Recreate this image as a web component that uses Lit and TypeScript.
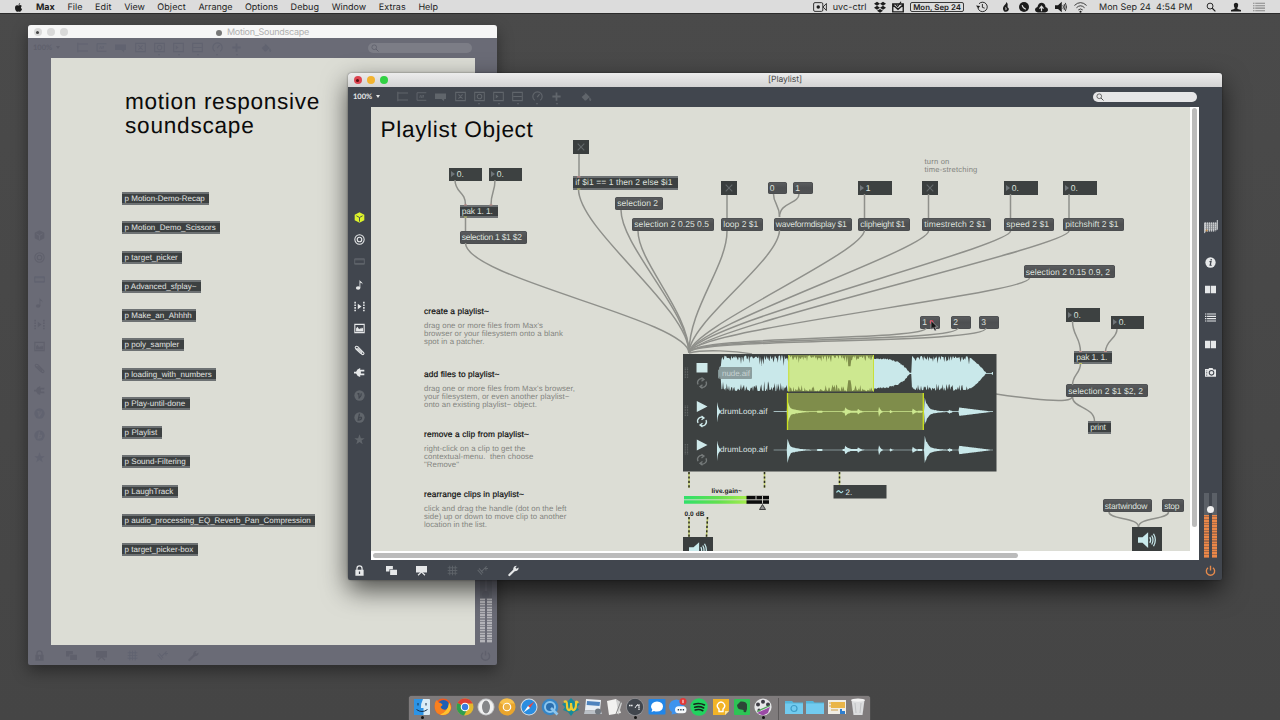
import { LitElement, html, svg, css, nothing } from "lit";
import { customElement, property } from "lit/decorators.js";
import { classMap } from "lit/directives/class-map.js";
import { styleMap } from "lit/directives/style-map.js";

/* ---------- text fitting ---------- */
const pen = document.createElement("canvas").getContext("2d")!;
/** Letter spacing that makes `text` span `width` pixels in the given font. */
function tracking(text: string, font: string, width: number) {
  pen.font = font;
  return `${((width - pen.measureText(text).width) / text.length).toFixed(3)}px`;
}
const fit = (text: string, font: string, width: number, cls = "") =>
  html`<span class="fit ${cls}" style=${styleMap({ letterSpacing: tracking(text, font, width) })}>${text}</span>`;

const SANS = '"Liberation Sans"';

/* ---------- icons, drawn on a 16 x 16 grid ---------- */
const G: Record<string, unknown> = {
  object: svg`<path d="M.500 3H16M.500 13H16M1.200 1V15" fill="none" stroke="currentColor" stroke-width="1.6"/>`,
  message: svg`<path d="M15 2.5H1.500V13.5H15M5.500 10l1-4M8 10l1-4M10 10l1-4" fill="none" stroke="currentColor" stroke-width="1.4"/>`,
  comment: svg`<path d="M0 3.500H16V11.500H13.500L13 15L9.500 11.500H0Z" fill="currentColor"/>`,
  toggle: svg`<path d="M1 2H15V14H1ZM5 5L11 11M11 5L5 11" fill="none" stroke="currentColor" stroke-width="1.500"/>`,
  button: svg`<path d="M1 2H15V14H1Z" fill="none" stroke="currentColor" stroke-width="1.500"/><circle cx="8" cy="8" r="3.300" fill="none" stroke="currentColor" stroke-width="1.600"/>`,
  number: svg`<path d="M1 2H15V14H1Z" fill="none" stroke="currentColor" stroke-width="1.500"/><path d="M4 5L8 8L4 11Z" fill="currentColor"/>`,
  slider: svg`<path d="M1 2H15V14H1ZM2 8H14" fill="none" stroke="currentColor" stroke-width="1.500"/>`,
  dial: svg`<path d="M4 13.500A6.800 6.800 0 1 1 12 13.500M7.500 9L11 4.500" fill="none" stroke="currentColor" stroke-width="1.700"/>`,
  plus: svg`<path d="M8 2V14M2 8H14" stroke="currentColor" stroke-width="2.600"/>`,
  bucket: svg`<path d="M1 8L8 2L14 8L8 13.500H6Z" fill="currentColor"/><path d="M14 9q3 4 1 5q-2 0-1-5M6 1l4 5" fill="currentColor" stroke="currentColor"/>`,
  cube: svg`<path d="M8 0.500L15 4V12L8 15.500L1 12V4Z" fill="currentColor"/><path d="M3.500 5.500L8 8L12.500 5.500M8 8V14" fill="none" stroke="var(--hole)" stroke-width="1.300"/>`,
  target: svg`<circle cx="8" cy="8" r="6.800" fill="none" stroke="currentColor" stroke-width="1.500"/><circle cx="8" cy="8" r="3.300" fill="none" stroke="currentColor" stroke-width="1.700"/>`,
  film: svg`<path d="M1 4H15V12H1ZM1 5.500H15M1 10.800H15" fill="none" stroke="currentColor" stroke-width="1.400"/>`,
  note: svg`<path d="M8 12V1C9 4 13.500 4 12 8C12 6 9.500 5.500 9.200 5.500V13Z" fill="currentColor"/><ellipse cx="6" cy="13" rx="3.300" ry="2.500" fill="currentColor"/>`,
  clip: svg`<path d="M.5 1H2.800V3.500H.5ZM.5 5H2.800V7.300H.5ZM.5 8.800H2.800V11.200H.5ZM.5 12.700H2.800V15H.5ZM13.200 1H15.500V3.500H13.200ZM13.200 5H15.500V7.300H13.200ZM13.200 8.800H15.500V11.200H13.200ZM13.200 12.700H15.500V15H13.200ZM5.500 4L11 8L5.500 12Z" fill="currentColor"/>`,
  image: svg`<path d="M1.200 2H14.800V14H1.200Z" fill="none" stroke="currentColor" stroke-width="1.600"/><path d="M3 12.500V8L5 5.500L7.500 9L9 7.500L10.500 8.500L11.500 6.500L13.200 8V12.500Z" fill="currentColor"/>`,
  paperclip: svg`<path d="M3 5L11.500 13.500C13.500 15 15.500 12.500 14 11L5.500 2.500C3 .5 .5 3 2.500 5.500L9.500 12C11 13 12 11.500 11 10.500L5 4.500" fill="none" stroke="currentColor" stroke-width="1.500"/>`,
  plug: svg`<path d="M0 7H3Q4 3 9 1.500V4H15V6.500H10V9.500H15V12H9V14.500Q4 13 3 9.500H0Z" fill="currentColor"/>`,
  vee: svg`<circle cx="8" cy="8" r="7.500" fill="currentColor"/><path d="M5 5.500L7 5L7.500 11.500Q11 9 10.500 5" fill="none" stroke="var(--hole)" stroke-width="1.800"/>`,
  bee: svg`<circle cx="8" cy="8" r="7.500" fill="currentColor"/><path d="M8 2.500L6 12Q11 12 11 8.500Q10 6.500 7 9" fill="none" stroke="var(--hole)" stroke-width="1.800"/>`,
  star: svg`<path d="M8 .5L10 6H15.500L11 9.300L12.700 15L8 11.600L3.300 15L5 9.300L.5 6H6Z" fill="currentColor"/>`,
  lock: svg`<path d="M4.300 7.500V5A3.700 3.700 0 0 1 11.700 5V7.500" fill="none" stroke="currentColor" stroke-width="1.800"/><path d="M2 7H14V15.500H2Z" fill="currentColor"/><path d="M8 9.500V13" stroke="var(--hole)" stroke-width="1.800"/>`,
  windows: svg`<path d="M0 1.500H10V6H5V9.500H0Z" fill="currentColor"/><path d="M6 7H16V14.500H6Z" fill="currentColor"/>`,
  easel: svg`<path d="M0 1.500H16V11H0Z" fill="currentColor"/><path d="M8 10L3 15M8 10L13 15" stroke="currentColor" stroke-width="1.800"/>`,
  grid: svg`<path d="M1 4H15M1 8H15M1 12H15M4 1V15M8 1V15M12 1V15" stroke="currentColor" stroke-width="1.300"/>`,
  wand: svg`<path d="M1 7L7 14M3 5L9 12M6 10L14 2M10 5H16M13 2V8" stroke="currentColor" stroke-width="1.500"/>`,
  wrench: svg`<path d="M2 14.500L9 7.500" stroke="currentColor" stroke-width="3.200" stroke-linecap="round"/><path d="M7.500 6Q8 1 13 1L10.800 3.800L12.200 5.500L15.500 3.500Q15.500 9 9.500 9Z" fill="currentColor"/>`,
  matrix: svg`<path d="M1 3H15V12H1Z" fill="currentColor" opacity=".35"/><path d="M1 3.500H15M1 5.800H15M1 8.100H15M1 10.400H15M1 12.400H13" stroke="currentColor" stroke-width="1.500" stroke-dasharray="1.400 .9"/><path d="M.800 3V15M15.200 0V11" stroke="currentColor" stroke-width="1"/><circle cx="3" cy="12" r="1.200" fill="#b98646"/>`,
  info: svg`<circle cx="8" cy="8" r="7.500" fill="currentColor"/><path d="M9 3V5M6.500 6.700H8.700L7.500 12H9.800" fill="none" stroke="var(--hole)" stroke-width="1.800"/>`,
  book: svg`<path d="M0 2.500H7.500V13.500H0ZM8.500 2.500H16V13.500H8.500Z" fill="currentColor"/>`,
  list: svg`<path d="M0 3H2M3 3H16M0 6.300H2M3 6.300H16M0 9.600H2M3 9.600H16M0 13H2M3 13H16" stroke="currentColor" stroke-width="1.600"/>`,
  camera: svg`<path d="M0 3H5L6 1.500H11L12 3.500H16V14H0Z" fill="currentColor"/><circle cx="9.500" cy="8.500" r="3.300" fill="none" stroke="var(--hole)" stroke-width="1.500"/><path d="M2.500 5V13" stroke="var(--hole)" stroke-width="1.200" stroke-dasharray="1.300 1"/>`,
  power: svg`<path d="M4.500 4A6 6 0 1 0 11.500 4M8 1V8" fill="none" stroke="currentColor" stroke-width="2"/>`,
  lens: svg`<circle cx="6.500" cy="6.500" r="4.700" fill="none" stroke="currentColor" stroke-width="1.500"/><path d="M10 10L15 15" stroke="currentColor" stroke-width="1.800"/>`,
  speaker: svg`<path d="M0 5.500H4L9 1V15L4 10.500H0Z" fill="currentColor"/><path d="M10.500 5.500Q12 8 10.500 10.500M12.200 4Q14.500 8 12.200 12M13.800 2.500Q17 8 13.800 13.500" fill="none" stroke="currentColor" stroke-width="1.100"/>`,
  apple: svg`<path d="M11 0Q8 .8 8 3.500Q10.800 3.200 11 0ZM8 4.500Q11.500 2.500 14 5.500Q10.500 8 14.300 11Q12 16.500 9.500 15.500Q8 14.700 6.500 15.500Q4 16.500 2 11Q1 4 5.500 4Z" fill="currentColor"/>`,
  video: svg`<rect x=".7" y="3" width="10.500" height="10" rx="1.500" fill="none" stroke="currentColor" stroke-width="1"/><circle cx="6" cy="8" r="2" fill="currentColor"/><path d="M11.500 8L15.300 4V12Z" fill="none" stroke="currentColor" stroke-width="1"/>`,
  dropbox: svg`<path d="M4 1L8 3.700L4 6.400L0 3.700ZM12 1L16 3.700L12 6.400L8 3.700ZM4 6.400L8 9.100L4 11.800L0 9.100ZM12 6.400L16 9.100L12 11.800L8 9.100ZM8 10.500L12 13L8 15.800L4 13Z" fill="currentColor"/>`,
  mail: svg`<path d="M1 4H15V14.500H1ZM1 5L8 11L15 5" fill="none" stroke="currentColor" stroke-width="1.800"/><path d="M5 4.500L7.500 7.500L12 1" fill="none" stroke="currentColor" stroke-width="1.500"/>`,
  history: svg`<path d="M2.500 9A6.300 6.300 0 1 0 4 3.700M8.500 4V8.500L11.500 9.500" fill="none" stroke="currentColor" stroke-width="1.200"/><path d="M0 6L5.500 6.500L3 10Z" fill="currentColor"/>`,
  flame: svg`<path d="M9 0Q8 3 4.500 6.500Q1.500 11 5 15Q9 16.500 11.500 14Q14 10.500 10.500 8.500Q12 3 9 0Z" fill="currentColor"/><path d="M7.500 8V12.500Q9 12.500 8.800 10" fill="none" stroke="#ddd"/>`,
  phone: svg`<circle cx="8" cy="8" r="8" fill="currentColor"/><path d="M5 5Q6 10 11 11.500" fill="none" stroke="#ddd" stroke-width="1.700"/>`,
  cloud: svg`<path d="M3.500 14Q0 13.500 0 10.500Q0 8 3 7.300Q4 2 8.500 2Q12.500 2.500 13 7.300Q16 8 16 10.700Q16 13.500 12.500 14Z" fill="currentColor"/><path d="M8 12.500V8M5.500 9.500L8 6.500L10.500 9.500" fill="none" stroke="#ddd" stroke-width="1.500"/>`,
  wifi: svg`<path d="M.5 5.500Q8-1.500 15.500 5.500M3 8.300Q8 3.500 13 8.300M5.300 11Q8 8.500 10.700 11" fill="none" stroke="currentColor" stroke-width="1"/><circle cx="8" cy="13.300" r="1.300" fill="currentColor"/>`,
  user: svg`<path d="M0 15V12.800L5.500 11L6 9.500Q4.500 7.500 4.500 4Q5 1 8 1Q11 1 11.500 4Q11.500 7.500 10 9.500L10.500 11L16 12.800V15Z" fill="currentColor"/>`,
};
const icon = (name: string, size = 11, cls = "") =>
  html`<svg class="icon ${cls}" viewBox="0 0 16 16" width=${size} height=${size}>${G[name]}</svg>`;

/* ---------- patcher window ---------- */
const TOOLS = ["object", "message", "comment", "toggle", "button", "number", "slider", "dial", "plus"];
const SIDE: [string, string][] = [
  ["cube", "lime"], ["target", "on"], ["film", "off"], ["note", "on"], ["clip", "on"], ["image", "on"],
  ["paperclip", "on"], ["plug", "on"], ["vee", "off"], ["bee", "off"], ["star", "off"],
];
const FOOT: [string, string][] = [
  ["lock", "on"], ["windows", "on"], ["easel", "on"], ["grid", "off"], ["wand", "off"], ["wrench", "on"],
];
const PANEL = ["matrix", "info", "book", "list", "book", "camera"];

@customElement("max-window")
export class MaxWindow extends LitElement {
  @property() label = "";
  @property({ type: Boolean, reflect: true }) active = false;

  static styles = css`
    :host { display: grid; grid-template-rows: 13px 20px 1fr 20px; --frame: #6a6b76; --hole: #6a6b76; --on: #5f606c; --off: #616370;
      background: var(--frame); border-radius: 3px 3px 2px 2px; overflow: hidden; color: var(--on); text-rendering: geometricPrecision; }
    :host([active]) { grid-template-rows: 14px 20px 1fr 20px; --frame: #41464e; --hole: #41464e; --on: #e6e8e9; --off: #60656b; }
    .icon { display: block; flex: none; overflow: visible; }
    .title { display: grid; grid-template-columns: 60px 1fr 60px; align-items: center; background: #f6f6f6; color: #b0b0b0; font: 9px Inter, sans-serif; }
    :host([active]) .title { background: linear-gradient(#ececec, #d3d3d3); color: #4a4a4a; font-size: 8.500px; }
    .lights { display: flex; gap: 5.300px; padding-left: 5.500px; }
    .light { width: 8px; height: 8px; border-radius: 50%; background: #d9d9d9; display: grid; place-items: center; }
    .light.first::after { content: ""; width: 3px; height: 3px; border-radius: 50%; background: #444; }
    :host([active]) .close { background: #dd4450; }
    :host([active]) .light.first::after { background: #5e0d10; }
    :host([active]) .mini { background: #f2b32f; }
    :host([active]) .zoom { background: #31d143; }
    .name { display: flex; justify-content: center; align-items: center; gap: 5px; white-space: nowrap; line-height: 13px; padding-top: 1px; }
    .doc { width: 6px; height: 6px; border-radius: 50%; background: #777; }
    .tools { display: flex; align-items: center; padding: 0 25px 1px 5px; }
    .zoomlevel { width: 39.500px; font: bold 7.500px Lato, sans-serif; color: var(--on); display: flex; align-items: center; gap: 4px; }
    .tri { border: 2px solid transparent; border-top: 3.500px solid currentColor; border-bottom: 0; }
    .tool { width: 19.300px; display: flex; justify-content: center; position: relative; color: var(--off); }
    .tool.more::after { content: ""; position: absolute; bottom: -3px; border: 1.500px solid transparent; border-top: 2px solid currentColor; border-bottom: 0; }
    .bucket { margin-left: 10.500px; }
    .search { margin-left: auto; width: 101px; height: 10px; border-radius: 5px; background: #7c7d86; padding-left: 3px; display: flex; align-items: center; color: #5c5e69; }
    :host([active]) .search { background: #e6e6e7; color: #444; }
    .body { display: grid; grid-template-columns: 23px 1fr 22px; min-height: 0; }
    :host([active]) .body { grid-template-columns: 23px 1fr 23px; }
    .side { display: flex; flex-direction: column; align-items: center; justify-content: center; gap: 11.200px; padding-bottom: 10px; }
    .on { color: var(--on); } .off { color: var(--off); }
    .lime { color: var(--on); }
    :host([active]) .lime { color: #dcf32b; }
    .view { display: grid; min-width: 0; min-height: 0; background: #dcddd5; overflow: hidden; }
    :host([active]) .view { grid-template: 1fr 9px / 1fr 9px; background: #fff; }
    .canvas { position: relative; overflow: hidden; background: #dcddd5; }
    .vbar { padding: 1px 2px 24px; display: flex; } .hbar { padding: 2px 172px 2px 2px; display: flex; }
    .thumb { flex: 1; border-radius: 3px; background: #bbb; }
    .right { display: flex; flex-direction: column; align-items: center; padding-top: 113px; gap: 16.600px; }
    .right .matrix { margin-bottom: 6px; }
    .meters { margin-top: auto; display: flex; gap: 2.500px; padding-bottom: 2px; position: relative; }
    .meter { width: 5px; height: 65px; background: linear-gradient(#62646e 0 20px, transparent 20px), repeating-linear-gradient(#b3b3b8 0 1.400px, #85868e 1.400px 2.600px); }
    :host([active]) .meter { background: linear-gradient(#5b6067 0 22px, transparent 22px), repeating-linear-gradient(#ea8748 0 1.500px, #a96a48 1.500px 2.700px); }
    .knob { position: absolute; left: 2.500px; top: 13px; width: 7px; height: 7px; border-radius: 50%; background: #5d5f6a; }
    :host([active]) .knob { background: #f0f0f0; }
    .foot { display: flex; align-items: center; padding-left: 5.500px; padding-right: 6px; }
    .foot .cell { width: 30.500px; display: flex; }
    .foot .cell:first-child { width: 32px; }
    .foot .power { margin-left: auto; }
    :host([active]) .power { color: #e58a4c; }
  `;

  render() {
    return html`
      <div class="title">
        <div class="lights"><i class="light first close"></i><i class="light mini"></i><i class="light zoom"></i></div>
        <div class="name">${this.active ? nothing : html`<i class="doc"></i>`}${this.active
          ? fit(this.label, "8.5px Inter", 34) : fit(this.label, "9px Inter", 82)}</div>
      </div>
      <div class="tools">
        <div class="zoomlevel">100% <i class="tri"></i></div>
        ${TOOLS.map((t, i) => html`<div class=${classMap({ tool: true, more: i > 3 })}>${icon(t, 11)}</div>`)}
        <div class="tool bucket">${icon("bucket", 10)}</div>
        <div class="search">${icon("lens", 8)}</div>
      </div>
      <div class="body">
        <div class="side">${SIDE.map(([n, c]) => icon(n, 11, c))}</div>
        <div class="view">
          <div class="canvas"><slot></slot></div>
          ${this.active
            ? html`<div class="vbar"><i class="thumb"></i></div><div class="hbar"><i class="thumb"></i></div>`
            : nothing}
        </div>
        <div class="right">
          ${PANEL.map((n) => icon(n, n === "matrix" ? 14 : 11, n))}
          <div class="meters"><i class="meter"></i><i class="meter"></i><i class="knob"></i></div>
        </div>
      </div>
      <div class="foot">
        ${FOOT.map(([n, c]) => html`<div class="cell ${c}">${icon(n, 11)}</div>`)}
        <span class="power">${icon("power", 11)}</span>
      </div>
    `;
  }
}

/* ---------- patch data ---------- */
const SUBPATCHERS: [string, number][] = [
  ["p Motion-Demo-Recap", 87], ["p Motion_Demo_Scissors", 98], ["p target_picker", 60], ["p Advanced_sfplay~", 79],
  ["p Make_an_Ahhhh", 74], ["p poly_sampler", 61.5], ["p loading_with_numbers", 94], ["p Play-until-done", 67.5],
  ["p Playlist", 39.5], ["p Sound-Filtering", 68], ["p LaughTrack", 55.5],
  ["p audio_processing_EQ_Reverb_Pan_Compression", 193], ["p target_picker-box", 75.5],
];

type Kind = "obj" | "msg" | "num" | "tog" | "dac";
/** kind, x, y, width, height, text */
const NODES: [Kind, number, number, number, number, string][] = [
  ["num", 449, 167.5, 33, 13, "0."], ["num", 489, 167.5, 33, 13, "0."],
  ["obj", 459.5, 204.5, 38, 13, "pak 1. 1."], ["msg", 459.5, 230.5, 67, 13, "selection 1 $1 $2"],
  ["tog", 573, 140, 16, 14, ""], ["obj", 573, 176, 104.5, 13.5, "if $i1 == 1 then 2 else $i1"],
  ["msg", 615, 196.5, 48, 13.5, "selection 2"], ["msg", 632, 217.5, 82, 13.5, "selection 2 0.25 0.5"],
  ["tog", 721, 181, 16, 14, ""], ["msg", 721, 217.5, 42, 13.5, "loop 2 $1"],
  ["msg", 767.5, 181.5, 19.5, 12.5, "0"], ["msg", 793, 181.5, 19.5, 12.5, "1"],
  ["msg", 773.5, 217.5, 78, 13, "waveformdisplay $1"],
  ["num", 858, 181, 33.5, 13.5, "1"], ["msg", 858, 217.5, 52, 13, "clipheight $1"],
  ["tog", 922, 181, 16, 14, ""], ["msg", 922, 217.5, 69, 13.5, "timestretch 2 $1"],
  ["num", 1004, 181, 33.5, 13.5, "0."], ["msg", 1004, 217.5, 50, 13.5, "speed 2 $1"],
  ["num", 1063, 181, 33.5, 13.5, "0."], ["msg", 1063, 217.5, 60.5, 13.5, "pitchshift 2 $1"],
  ["msg", 1023.5, 265, 91.5, 13, "selection 2 0.15 0.9, 2"],
  ["msg", 920, 316, 20, 12.5, "1"], ["msg", 951, 316, 20, 12.5, "2"], ["msg", 979, 316, 20, 12.5, "3"],
  ["num", 1066, 308, 33.5, 13.5, "0."], ["num", 1111, 315.5, 33, 13.5, "0."],
  ["obj", 1074, 351, 38, 13, "pak 1. 1."], ["msg", 1066, 384, 82, 13, "selection 2 $1 $2, 2"],
  ["obj", 1088, 420.5, 22.5, 13.5, "print"],
  ["msg", 1102.5, 499, 49.5, 13, "startwindow"], ["msg", 1162, 499, 22, 13, "stop"],
  ["dac", 1132, 527, 30, 25, ""], ["dac", 683, 537, 29.5, 25, ""],
];

const CORDS = [
  "M455 180C455 193 465.5 191 465.5 205", "M495 180C495 192 491 192 491 205", "M465.500 217V231",
  "M465.500 243C465.500 278 689 320 689 353", "M579 154V176", "M578.500 189C578.500 230 689 308 689 353",
  "M621 210C621 246 689 312 689 353", "M638 231C638 262 689 312 689 353",
  "M727 195V218", "M727 231C727 266 689 308 689 353",
  "M773.500 194C773.500 204 779.500 204 779.500 217", "M799 194C799 204 779.500 202 779.500 217",
  "M779.500 230C779.500 260 689 322 689 353", "M864.500 194V218", "M864.500 230C864.500 253 689 328 689 353",
  "M928.500 194V218", "M928.500 231C928.500 249 689 328 689 353",
  "M1010.500 194V218", "M1010.500 231C1010.500 247 689 326 689 353",
  "M1069 194V218", "M1069 231C1069 247 689 330 689 353",
  "M1029.500 278C1029.500 294 689 329 689 353",
  "M926 328C926 341 689 335 689 353", "M958 328C958 343 689 336 689 353", "M986 328C986 345 689 337 689 353",
  "M1072 397C1072 404 1030 399 996 394", "M752 354C735 351 705 349 689 353",
  "M1072.500 321C1072.500 336 1080.500 337 1080.500 352", "M1117 329C1117 339 1105.500 340 1105.500 352",
  "M1080.500 364C1080.500 373 1072.500 375 1072.500 385", "M1072.500 397C1072.500 408 1094.500 407 1094.500 421",
  "M1109 512C1109 520 1138.500 517 1138.500 527", "M1168.500 512C1168.500 520 1138.500 517 1138.500 527",
];
const SIGNALS = ["M689 472V488", "M764.500 472V488", "M839.500 472V485", "M689 517V537", "M707.500 517L706.500 537"];

/** x, y, heading, its width, body lines with their widths */
const HELP: [number, number, string, number, [string, number][]][] = [
  [424, 307, "create a playlist~", 65, [["drag one or more files from Max's", 119], ["browser or your filesystem onto a blank", 139], ["spot in a patcher.", 60.5]]],
  [424, 370, "add files to playlist~", 75.5, [["drag one or more files from Max's browser,", 151], ["your filesystem, or even another playlist~", 145.5], ["onto an existing playlist~ object.", 113]]],
  [424, 430, "remove a clip from playlist~", 105, [["right-click on a clip to get the", 101.5], ["contextual-menu.\u00a0 then choose", 109.5], ['"Remove"', 35]]],
  [424, 490, "rearrange clips in playlist~", 100, [["click and drag the handle (dot on the left", 142.5], ["side) up or down to move clip to another", 142.5], ["location in the list.", 63]]],
];

const OX = 371, OY = 107;
const at = (x: number, y: number, w?: number, h?: number) =>
  styleMap({ left: `${x - OX}px`, top: `${y - OY}px`, ...(w ? { width: `${w}px` } : {}), ...(h ? { height: `${h}px` } : {}) });

/* ---------- waveforms ---------- */
const noise = (i: number) => { const v = Math.sin(i * 127.1) * 43758.5453; return v - Math.floor(v); };
function outline(x0: number, x1: number, cy: number, amp: (x: number, i: number) => number) {
  const top: string[] = [], low: string[] = [];
  for (let x = x0, i = 0; x <= x1; x += 0.75, i++) {
    top.push(`${x.toFixed(2)} ${(cy - amp(x, i)).toFixed(2)}`);
    low.unshift(`${x.toFixed(2)} ${(cy + amp(x, i + 500)).toFixed(2)}`);
  }
  return `M${top.join("L")}L${low.join("L")}Z`;
}
const songAmp = (x: number, i: number) => {
  if (x < 721) return 5 * noise(i) + 3;
  if (x > 986) return 0.4 + (x > 992 ? 1 : 0);
  if (x > 909.5 && x < 912) return 0.6;
  const depth = x < 788 ? 13 : 9;
  const rough = 17.9 - depth * noise(i) * noise(i + 77);
  if (x < 874) return Math.abs(x - 849.5) < 1.3 ? 7 : rough;
  if (x < 910) { const t = (x - 874) / 36; return Math.max(1.5, 15.5 * Math.pow(1 - Math.pow(t, 3), 0.8) - noise(i) * 1.6); }
  return x > 970 ? Math.max(0.5, 16 * (1 - Math.pow((x - 970) / 17, 1.2)) - noise(i)) : rough - 0.5;
};
const HITS = [[717, 12, 1.4], [787.5, 14, 2.6], [790, 4, 9], [845, 5, 4], [858, 3, 3], [878.5, 7.5, 1.6], [890, 2, 2], [912.5, 4, 2.5], [924.5, 16.5, 3.6], [928, 4, 8], [949, 3, 1.5]];
const drumAmp = (x: number, i: number) => {
  let a = 0.35 + (noise(Math.round(x / 5)) > 0.8 ? 0.6 : 0);
  if (x > 720 && x < 774) return 0;
  for (const [h, g, d] of HITS) if (x >= h) a = Math.max(a, g * Math.exp(-(x - h) / d) * (0.8 + 0.2 * noise(i)));
  if (x > 959) a = Math.max(a, 4.2 * (1 - (x - 959) / 34));
  return a;
};
const SONG = outline(718.5, 993, 373.3, songAmp);
const DRUM = (cy: number) => outline(717, 993, cy, drumAmp);
const loopIcon = (cy: number, on: boolean) => svg`<g transform="translate(702 ${cy})" fill="none" stroke=${on ? "#cfe9ea" : "#757a7a"} stroke-width="1.300">
  <path d="M-4 1.500A4 4 0 0 1 1.500-3.800M4-1.500A4 4 0 0 1-1.500 3.800"/><path d="M-.5-5.500L2-3.600L-.5-1.800M.5 5.500L-2 3.600L.5 1.800"/></g>`;
const grip = (cy: number) => svg`<path d="M685.300 ${cy - 5.5}V${cy + 5.5}M687.500 ${cy - 5.5}V${cy + 5.5}" stroke="#5d6161" stroke-width="1.300" stroke-dasharray="1 .6"/>`;

/* ---------- menu bar and dock data ---------- */
const MENU: [string, number][] = [
  ["File", 15], ["Edit", 16.5], ["View", 20.5], ["Object", 28.5], ["Arrange", 34], ["Options", 33], ["Debug", 28.5],
  ["Window", 34.5], ["Extras", 27], ["Help", 19.5],
];
/** icon name, size, gap before it */
const STATUS: [string, number, number][] = [
  ["history", 12, 11.5], ["flame", 10, 13], ["phone", 10, 8.5], ["cloud", 13, 6], ["speaker", 12, 6.5], ["wifi", 13, 7.5],
];
const folder = svg`<path d="M0 3H7L8.500 4.500H18V16H0Z" fill="#54b5da"/><path d="M0 5.500H18V16H0Z" fill="#72cbef"/>`;
const DOCK: { art: unknown; run?: boolean; sep?: boolean }[] = [
  { run: true, art: svg`<rect x="1" y="1" width="16" height="16" rx="1" fill="#d9ecf7"/><path d="M1 1H10Q7.500 6 8 10H10.500L10.500 17H1Z" fill="#2c94e6"/><path d="M5 5V7.500M13 5V7.500M3.500 11.500Q9 15.500 14.500 11.500" fill="none" stroke="#14304f" stroke-width="1"/>` },
  { art: svg`<circle cx="9" cy="9" r="8.500" fill="#ef5a1f"/><circle cx="9.500" cy="8" r="6" fill="#1f5fb4"/><path d="M1 5Q1.500 3 3 2L4.500 4.500Q8 5 8.500 7L6.500 9Q8 12.500 12 11.500Q15.500 10 15 4.500Q19 10 14.500 15Q9 19 3 15Q0 11 1 5Z" fill="#f9801f"/><path d="M15 4.500Q19 10 14.500 15Q11 18 6 16.500Q14 14 15 4.500Z" fill="#fdc330"/>` },
  { art: svg`<circle cx="9" cy="9" r="8.500" fill="#e2b92f"/><path d="M9 9L1.600 4.800A8.500 8.500 0 0 0 8 17.400L12 10Z" fill="#2f9e4f"/><path d="M9 9L1.600 4.800A8.500 8.500 0 0 1 16.700 5.500H9Z" fill="#dd4035"/><circle cx="9" cy="9" r="4.300" fill="#fff"/><circle cx="9" cy="9" r="3.200" fill="#3a7de0"/>` },
  { art: svg`<circle cx="9" cy="9" r="8.500" fill="#c2c4c6"/><circle cx="9" cy="9" r="7.500" fill="#f1f1f1"/><ellipse cx="9" cy="9" rx="4" ry="6.500" fill="#858688"/>` },
  { art: svg`<circle cx="9" cy="9" r="8.500" fill="#e9a52c"/><path d="M9 9L1.600 4.800A8.500 8.500 0 0 1 16.700 5.500H9Z" fill="#f7c04c"/><circle cx="9" cy="9" r="4.300" fill="#fff"/><circle cx="9" cy="9" r="3.200" fill="#edb348"/>` },
  { art: svg`<circle cx="9" cy="9" r="8.500" fill="#d5dce2"/><circle cx="9" cy="9" r="7.500" fill="#2a8de0"/><path d="M14.500 3.500L10 10L8 8Z" fill="#e8483f"/><path d="M3.500 14.500L8 8L10 10Z" fill="#fff"/>` },
  { art: svg`<circle cx="9" cy="9" r="8.300" fill="#3585c6"/><circle cx="9" cy="9" r="5" fill="#2b6fae" stroke="#8cc6ee" stroke-width="2"/><path d="M10 10L16.500 16.500" stroke="#8cc6ee" stroke-width="2.600"/>` },
  { art: svg`<path d="M9 0L13 4L18 6L15 9L17 12L12 14L9 18L6 14L1 12L3 9L0 6L5 4Z" fill="#168a9a"/><path d="M2 4Q5 2 5 7Q5 12.500 7.500 12Q9.500 11 9 5Q9.500 13 12 12Q14.500 10 14 4Q14.500 3 16 5" fill="none" stroke="#efcb31" stroke-width="2.200"/>` },
  { art: svg`<path d="M2 1L17 2L16 13L1 12Z" fill="#e9eff4"/><path d="M3 3L16 4L15.500 8L2.700 7Z" fill="#4e83bd"/><path d="M1 12L17 13L18 16H0Z" fill="#bbc1c7"/><circle cx="14" cy="13.500" r="3" fill="#707880"/>` },
  { art: svg`<path d="M2 3L11 1L16 15L4 17Z" fill="#f2f2f0"/><path d="M11 1L17 5L13.500 17" fill="#d0d1d0"/><path d="M16 3L11 16" stroke="#858585" stroke-width="1"/>` },
  { run: true, art: svg`<circle cx="9" cy="9" r="8.800" fill="#9a9da1"/><circle cx="9" cy="9" r="8.200" fill="#41464d"/><path d="M3 7.500H7M11 7H13V12" fill="none" stroke="#e6e8ea" stroke-width="1.300" stroke-dasharray="1.500 .4"/><path d="M9 10L11 7" stroke="#e6e8ea"/>` },
  { art: svg`<rect x=".5" y="1" width="17" height="15.500" rx="1" fill="#2186e8"/><path d="M9 3.500Q15 4 15 8.500Q14.500 13.500 9 13.500Q7 13.500 6 13L3.500 14L4.300 11.500Q3 10 3 8.500Q3.500 4 9 3.500Z" fill="#fff"/>` },
  { art: svg`<path d="M7.500 1.500Q14.500 2 15 8.500Q14.500 15 7.500 15.500L2.500 16.500L3 14Q0 12 0 8.500Q.5 2 7.500 1.500Z" fill="#3d93ee"/><rect x="6" y="8.300" width="11.500" height="7" rx="3.500" fill="#f7fafc"/><path d="M8.700 11.800H15.500" stroke="#345" stroke-width="1.400" stroke-dasharray="1.400 1.100"/><circle cx="14" cy="3.500" r="3.500" fill="#e23737"/><path d="M14 1.800V5.200" stroke="#fff"/>` },
  { art: svg`<circle cx="9" cy="9" r="8.700" fill="#22d35f"/><path d="M4 6.200Q9.500 4.500 14.500 7M4.700 9.200Q9.500 7.800 13.700 10M5.200 12Q9.500 10.800 12.800 12.700" fill="none" stroke="#14291b" stroke-width="1.600" stroke-linecap="round"/>` },
  { art: svg`<path d="M1 1H17V13L13 17H1Z" fill="#f2b427"/><path d="M13 17V13H17Z" fill="#fbe59e"/><path d="M7 11Q4.500 9 5.500 6.500Q7 4 9 4Q11 4 12.500 6.500Q13.500 9 11 11V13.500H7Z" fill="none" stroke="#fff" stroke-width="1.400"/>` },
  { art: svg`<rect x="1" y="1" width="16" height="16" rx="1" fill="#2dc455"/><path d="M4 7L7.500 3.500Q13 3 14 6.500Q14.500 11 13 14Q10 15 10.500 12L8 11.500Q4.500 11.500 4 7Z" fill="#2d4637"/>` },
  { run: true, art: svg`<circle cx="9" cy="9" r="8.600" fill="#e6e6e8"/><g fill="#3d3b44"><circle cx="9" cy="3.700" r="2"/><circle cx="4" cy="6.500" r="2"/><circle cx="14" cy="6.500" r="2"/><circle cx="5" cy="12" r="1.500"/></g><path d="M3 15L16 9L14 15L9 17.500Z" fill="#9b4aa6"/><path d="M3 13.500L16 7.500" stroke="#51a75c" stroke-width="1.300"/>` },
  { sep: true, art: svg`${folder}<circle cx="9" cy="10.500" r="3" fill="none" stroke="#3f9dc6" stroke-width="1.200"/>` },
  { art: folder },
  { art: svg`<rect y="2" width="18" height="14" fill="#f0ede4"/><path d="M3 4H17V10H3Z" fill="#e9b548"/><path d="M1 5H3M1 8H3M3 12H10" stroke="#d0a04a"/><path d="M12 11H14V13H17V16H12Z" fill="#2f7fd0"/>` },
  { art: svg`<path d="M2.500 2H15.500L13.500 17H4.500Z" fill="#dcdddf"/><ellipse cx="9" cy="2.200" rx="7" ry="1.600" fill="#f3f3f3"/><path d="M6 5L7 15M12 5L11 15" stroke="#c1c3c5"/>` },
];

@customElement("app-root")
export class AppRoot extends LitElement {
  static styles = css`
    :host { display: block; position: relative; width: 1280px; height: 720px; overflow: hidden; background: linear-gradient(#4a4a4a, #454545);
      font-family: "Liberation Sans", Arial, sans-serif; text-rendering: geometricPrecision; }
    .icon { display: block; flex: none; overflow: visible; }
    .fit { white-space: pre; display: block; }
    .menubar { box-sizing: border-box; height: 14px; display: flex; align-items: center; padding: 1px 0 0 14px; background: #dcdcdc; border-bottom: 1px solid #2c2c2c;
      color: #1c1c1c; font: 9px/13px Inter, sans-serif; gap: 12.600px; }
    .menubar .brand { font-weight: 700; }
    .menubar .apple { margin-right: .3px; }
    .status { display: flex; align-items: center; margin-left: auto; padding-right: 15.500px; }
    .status > * { flex: none; }
    .g6 { margin-left: 6px; } .g7 { margin-left: 7px; }
    .g11 { margin-left: 11.500px; } .g14 { margin-left: 13.500px; } .g15 { margin-left: 15px; }
    .date { border: 1px solid #3a3a3a; border-radius: 2px; height: 8px; line-height: 8.500px; padding: 0 2.500px; margin-left: 6px; font-weight: 600; font-size: 7.800px; }
    .faint { color: #888; }
    .back { position: absolute; left: 28px; top: 25px; width: 469px; height: 640px; box-shadow: 0 6px 16px rgba(0,0,0,.4); }
    .front { position: absolute; left: 348px; top: 73px; width: 874px; height: 507px; }
    .cast { position: absolute; left: 348px; top: 73px; width: 874px; height: 507px; border-radius: 4px; box-shadow: 0 10px 26px rgba(0,0,0,.66), 0 0 2px rgba(0,0,0,.5); }
    .patch { padding: 32px 0 0 71px; }
    .heading { font-size: 22.600px; line-height: 24px; padding-left: 3px; color: #0b0b0b; }
    .subs { display: flex; flex-direction: column; align-items: flex-start; gap: 16.250px; padding-top: 54px; }
    .obj { box-sizing: border-box; height: 13px; background: #3c4041; border: solid #6d7173; border-width: 2.200px 0; color: #e2e4e2; font-size: 8px; padding-left: 2.600px; display: flex; align-items: center; line-height: 9px; }
    .node { position: absolute; font-size: 8.500px; color: #dfe1df; padding-left: 2.300px; }
    .msg { box-sizing: border-box; border-radius: 2.500px; background: linear-gradient(#5c5e60, #4d4f51 50%, #515355); display: flex; align-items: center; line-height: 10px; box-shadow: inset 0 0 0 .6px #47494b; }
    .num { box-sizing: border-box; background: #3d4141; display: flex; align-items: center; gap: 1.500px; }
    .flag { border: 3px solid transparent; border-left: 4px solid #70767a; border-right: 0; }
    .tog, .dac { box-sizing: border-box; background: #3a3e3e; padding: 0; display: grid; place-items: center; color: #63686a; }
    .dac { color: #c9eaec; }
    .board { position: absolute; inset: 0; width: 819px; height: 444px; }
    .abs { position: absolute; }
    .title { font-size: 22.600px; line-height: 26px; color: #0b0b0b; }
    .help h4 { margin: 0 0 5px; font-weight: 400; font-size: 8.300px; line-height: 9px; color: #0e0e0e; -webkit-text-stroke: .2px #0e0e0e; }
    .help { font-size: 7.800px; line-height: 8.050px; color: #83847f; }
    .help .lines { padding-top: .8px; }
    .hint { font-size: 7.600px; line-height: 8px; color: #83847f; }
    .tiny { font-size: 6.500px; line-height: 8px; font-weight: 700; color: #1a1a1a; }
    .clip { font-size: 8px; line-height: 9px; color: #dfe6e6; }
    .chip { background: rgba(128,145,146,.85); color: #c6d2d2; border-radius: 1px; padding: 1.500px 0 1.500px 3px; font-size: 8px; line-height: 9px; box-sizing: border-box; }
    .dock { position: absolute; left: 409px; top: 696px; width: 461px; height: 24px; box-sizing: border-box; padding: 2px 0 0 2.500px; display: flex;
      background: #7f7b7c; border-radius: 3px 3px 0 0; box-shadow: 0 0 1px #999; }
    .app { width: 21.320px; display: flex; flex-direction: column; align-items: center; gap: 0; }
    .app.sep { border-left: 1px solid #5d5a5b; margin-left: 4px; padding-left: 4px; width: 22px; }
    .dot { width: 3px; height: 3px; border-radius: 50%; background: #141414; margin-top: -.5px; }
  `;

  private node([kind, x, y, w, h, text]: (typeof NODES)[number]) {
    const body =
      kind === "tog" ? html`<svg width="8" height="8" viewBox="0 0 8 8"><path d="M.7 .7L7.300 7.300M7.300 .7L.7 7.300" stroke="currentColor" stroke-width="1.100"/></svg>`
      : kind === "dac" ? icon("speaker", 18)
      : kind === "num" ? html`<i class="flag"></i><span>${text}</span>`
      : text.length > 1 ? fit(text, `8.5px ${SANS}`, w - 7.2)
      : text;
    return html`<div class="node ${kind}" style=${at(x, y, w, h)}>${body}</div>`;
  }

  render() {
    return html`
      <header class="menubar">
        ${icon("apple", 9, "apple")}
        ${fit("Max", "bold 9px Inter", 19, "brand")}
        ${MENU.map(([t, w]) => fit(t, "9px Inter", w))}
        <div class="status">
          ${icon("video", 14)}
          <span class="g6">${fit("uvc-ctrl", "9px Inter", 34)}</span>
          <span class="g7">${icon("dropbox", 12)}</span>
          <span class="g6">${icon("mail", 12)}</span>
          <span class="date">${fit("Mon, Sep 24", "600 7.8px Inter", 48)}</span>
          ${STATUS.map(([n, s, g]) => html`<span style=${styleMap({ marginLeft: `${g}px` })}>${icon(n, s)}</span>`)}
          <span class="g11">${fit("Mon Sep 24  4:54 PM", "9px Inter", 93.5)}</span>
          <span class="g14">${icon("lens", 10)}</span>
          <span class="g15">${icon("user", 10)}</span>
          <span class="faint g11">${icon("list", 12)}</span>
        </div>
      </header>

      <max-window class="back" label="Motion_Soundscape">
        <div class="patch">
          <div class="heading">${fit("motion responsive", `22.6px ${SANS}`, 195)}${fit("soundscape", `22.6px ${SANS}`, 129.5)}</div>
          <div class="subs">
            ${SUBPATCHERS.map(([t, w]) => html`<div class="obj" style=${styleMap({ width: `${w}px` })}>${fit(t, `8px ${SANS}`, w - 6.8)}</div>`)}
          </div>
        </div>
      </max-window>

      <div class="cast"></div>
      <max-window class="front" active label="[Playlist]">
        <div class="abs title" style=${at(380.5, 117)}>${fit("Playlist Object", `22.6px ${SANS}`, 153)}</div>
        ${HELP.map(([x, y, head, hw, lines]) => html`
          <section class="abs help" style=${at(x, y)}>
            <h4>${fit(head, `8.3px ${SANS}`, hw)}</h4>
            <div class="lines">${lines.map(([t, w]) => fit(t, `7.8px ${SANS}`, w))}</div>
          </section>`)}
        <div class="abs hint" style=${at(924.5, 158)}>${fit("turn on", `7.6px ${SANS}`, 25)}${fit("time-stretching", `7.6px ${SANS}`, 53)}</div>
        ${NODES.map((n) => this.node(n))}

        <svg class="board" viewBox="371 107 819 444">
          <g fill="none" stroke="#8f908b" stroke-width="1.500">${CORDS.map((d) => svg`<path d=${d}/>`)}</g>
          <g fill="none" stroke-width="1.500">
            ${SIGNALS.map((d) => svg`<path d=${d} stroke="#c3cf6a"/><path d=${d} stroke="#2a2b20" stroke-dasharray="2.200 2.200"/>`)}
          </g>
          <rect x="683" y="354" width="313.500" height="117.500" fill="#3d4141"/>
          ${grip(373)}${grip(411)}${grip(449.5)}
          <path d="M696.500 363H707.500V372.500H696.500Z M696.800 401L707.500 406.500L696.800 412Z M696.800 439.500L707.500 445L696.800 450.500Z" fill="#cfe9ea"/>
          ${loopIcon(383, false)}${loopIcon(421.5, true)}${loopIcon(459.7, false)}
          <path d=${SONG} fill="#c9e8ea"/>
          <clipPath id="selA"><rect x="788" y="355" width="86" height="36.500"/></clipPath>
          <clipPath id="selB"><rect x="787" y="393" width="137" height="37"/></clipPath>
          <rect x="788" y="355" width="86" height="36.500" fill="#7f8d4b"/>
          <path d=${SONG} fill="#cde890" clip-path="url(#selA)"/>
          <path d="M788.800 355V391.500M873.500 355V391.500" stroke="#c8e03a" stroke-width="1"/>
          <path d=${DRUM(411.7)} fill="#c9e8ea"/>
          <rect x="787" y="393" width="137" height="37" fill="#7f8d4b"/>
          <path d=${DRUM(411.7)} fill="#cde890" clip-path="url(#selB)"/>
          <path d="M787.500 393V430M923.300 393V430" stroke="#cbe01f" stroke-width="1.300"/>
          <path d=${DRUM(450)} fill="#c9e8ea"/>
          <defs><linearGradient id="lvl"><stop offset="0" stop-color="#2fe06a"/><stop offset=".55" stop-color="#63e04f"/><stop offset="1" stop-color="#a5ec4e"/></linearGradient></defs>
          <path d="M684 496H747V503.700H684Z" fill="url(#lvl)"/>
          <path d="M746.500 495.800H769V503.800H746.500Z" fill="#0c0c0c"/>
          <path d="M684 499.800H769M756 496V499.500M762.500 496V503.500" stroke="#dcddd5" stroke-width=".9"/>
          <path d="M762.500 504.500L765.500 509.500H759.500Z" fill="#8f8f8f" stroke="#222" stroke-width=".8"/>
          <rect x="833.500" y="485" width="53" height="13.500" fill="#3d4141"/>
          <path d="M836.500 492.500Q838 489.500 839.700 491.700T843 491" fill="none" stroke="#a5dfe4" stroke-width="1.300"/>
          <path d="M577 176.800H580.500M464 205H467M489.500 205H492.500M1079 351.500H1082M1104 351.500H1107" stroke="#c08a86" stroke-width="1.200"/>
          <path d="M577 189H580.500M464 217H467M1079 363.500H1082" stroke="#bcc05a" stroke-width="1.200"/>
        </svg>

        <div class="abs chip" style=${at(719, 367, 32.5, 12)}>${fit("nude.aif", `8px ${SANS}`, 28)}</div>
        <div class="abs clip" style=${at(720, 407)}>${fit("drumLoop.aif", `8px ${SANS}`, 47.5)}</div>
        <div class="abs clip" style=${at(720, 445.3)}>${fit("drumLoop.aif", `8px ${SANS}`, 47.5)}</div>
        <div class="abs clip" style=${at(845.5, 487.5)}>2.</div>
        <div class="abs tiny" style=${at(711.5, 488)}>${fit("live.gain~", `bold 6.5px ${SANS}`, 30.5)}</div>
        <div class="abs tiny" style=${at(684.5, 510.6)}>${fit("0.0 dB", `bold 6.5px ${SANS}`, 20)}</div>
        <svg class="board" viewBox="371 107 819 444">
          <circle cx="931.500" cy="322" r="2" fill="#e0324b"/>
          <path d="M931 320.500V329.500L933.200 327.600L934.800 331L936.300 330.300L934.800 327H937.500Z" fill="#151515" stroke="#ddd" stroke-width=".5"/>
        </svg>
      </max-window>

      <nav class="dock">
        ${DOCK.map((d) => html`<div class=${classMap({ app: true, sep: !!d.sep })}>
          <svg class="icon" width="18" height="18" viewBox="0 0 18 18">${d.art}</svg>
          ${d.run ? html`<i class="dot"></i>` : nothing}
        </div>`)}
      </nav>
    `;
  }
}
